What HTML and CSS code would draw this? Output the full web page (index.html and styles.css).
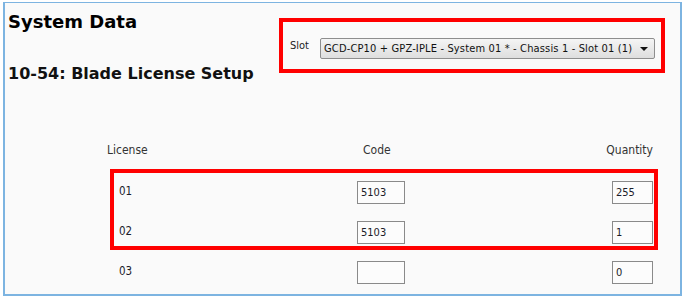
FILE: index.html
```html
<!DOCTYPE html>
<html lang="en">
<head>
  <meta charset="UTF-8">
  <title>System Data - Blade License Setup</title>
  <link rel="stylesheet" href="styles.css">
</head>
<body>
  <div class="frame">
    <div class="top">
      <div class="titles">
        <h1 class="title">System Data</h1>
        <h2 class="subtitle">10-54: Blade License Setup</h2>
      </div>
      <div class="slot-box">
        <span class="slot-label">Slot</span>
        <div class="select">
          <span class="select-text">GCD-CP10 + GPZ-IPLE - System 01 * - Chassis 1 - Slot 01 (1)</span>
          <span class="arrow"></span>
        </div>
      </div>
    </div>

    <div class="licenses">
      <div class="head">
        <span class="head-license">License</span>
        <span class="head-code">Code</span>
        <span></span>
        <span class="head-qty">Quantity</span>
      </div>

      <div class="mark">
        <div class="row">
          <span class="num">01</span>
          <input class="field" type="text" value="5103">
          <span></span>
          <input class="field qty" type="text" value="255">
        </div>
        <div class="row">
          <span class="num">02</span>
          <input class="field" type="text" value="5103">
          <span></span>
          <input class="field qty" type="text" value="1">
        </div>
      </div>

      <div class="plain">
        <div class="row">
          <span class="num">03</span>
          <input class="field" type="text" value="">
          <span></span>
          <input class="field qty" type="text" value="0">
        </div>
      </div>
    </div>
  </div>
</body>
</html>
```

FILE: styles.css
```css
html, body {
  margin: 0;
  padding: 0;
  background: #ffffff;
  font-family: 'DejaVu Sans', sans-serif;
  color: #1c1c2a;
}

.frame {
  box-sizing: border-box;
  width: 679px;
  height: 294px;
  margin: 2px 0 0 3px;
  border: 2px solid #7db4e1;
  border-top-width: 1px;
  background: #fafafa;
}

.top {
  display: flex;
  align-items: flex-start;
}

.titles {
  padding: 7px 0 0 3px;
}

.title {
  margin: 0;
  font-size: 18px;
  font-weight: bold;
  line-height: 23px;
  color: #000;
}

.subtitle {
  margin: 30px 0 0;
  font-size: 16px;
  font-weight: bold;
  line-height: 21px;
  color: #111;
}

.slot-box {
  display: flex;
  align-items: flex-start;
  box-sizing: border-box;
  width: 386px;
  height: 55px;
  margin: 15px 15px 0 auto;
  padding: 16px 6px 0 7px;
  border: 4px solid #ff0000;
}

.slot-label {
  width: 30px;
  margin-top: 1px;
  font-size: 11px;
  font-stretch: condensed;
  color: #222;
}

.select {
  flex: 1;
  display: flex;
  align-items: center;
  box-sizing: border-box;
  height: 21px;
  padding: 0 6px 0 3px;
  border: 1px solid #8e8e8e;
  border-radius: 2px;
  background: linear-gradient(#f5f5f5, #dedede);
}

.select-text {
  flex: 1;
  font-size: 11px;
  font-stretch: condensed;
  letter-spacing: 0.15px;
  white-space: nowrap;
  color: #111;
}

.arrow {
  width: 0;
  height: 0;
  border-left: 4px solid transparent;
  border-right: 4px solid transparent;
  border-top: 4px solid #111;
}

.licenses {
  width: 548px;
  margin: 59px 0 0 105px;
}

.head {
  display: grid;
  grid-template-columns: 250px 48px 1fr auto;
  margin: 0 5px 0 -3px;
  font-size: 12px;
  font-stretch: condensed;
  color: #333;
}

.head-code {
  margin-left: 6px;
}

.mark,
.plain {
  display: flex;
  flex-direction: column;
  gap: 17px;
  padding: 8px 1px 2px 5px;
  border: 4px solid #ff0000;
}

.mark {
  margin-top: 12px;
}

.plain {
  margin-top: 7px;
  padding-top: 0;
  border-color: transparent;
}

.row {
  display: grid;
  grid-template-columns: 238px 48px 1fr 41px;
  align-items: start;
  height: 23px;
}

.num {
  margin-top: 3px;
  font-size: 11.5px;
  font-stretch: condensed;
}

.field {
  box-sizing: border-box;
  width: 100%;
  height: 23px;
  margin: 0;
  padding: 0 3px;
  border: 1px solid #8a8a8a;
  background: #fcfcfc;
  font-family: 'DejaVu Sans', sans-serif;
  font-size: 11px;
  font-stretch: condensed;
  color: #1c1c2a;
  outline: none;
}
```
